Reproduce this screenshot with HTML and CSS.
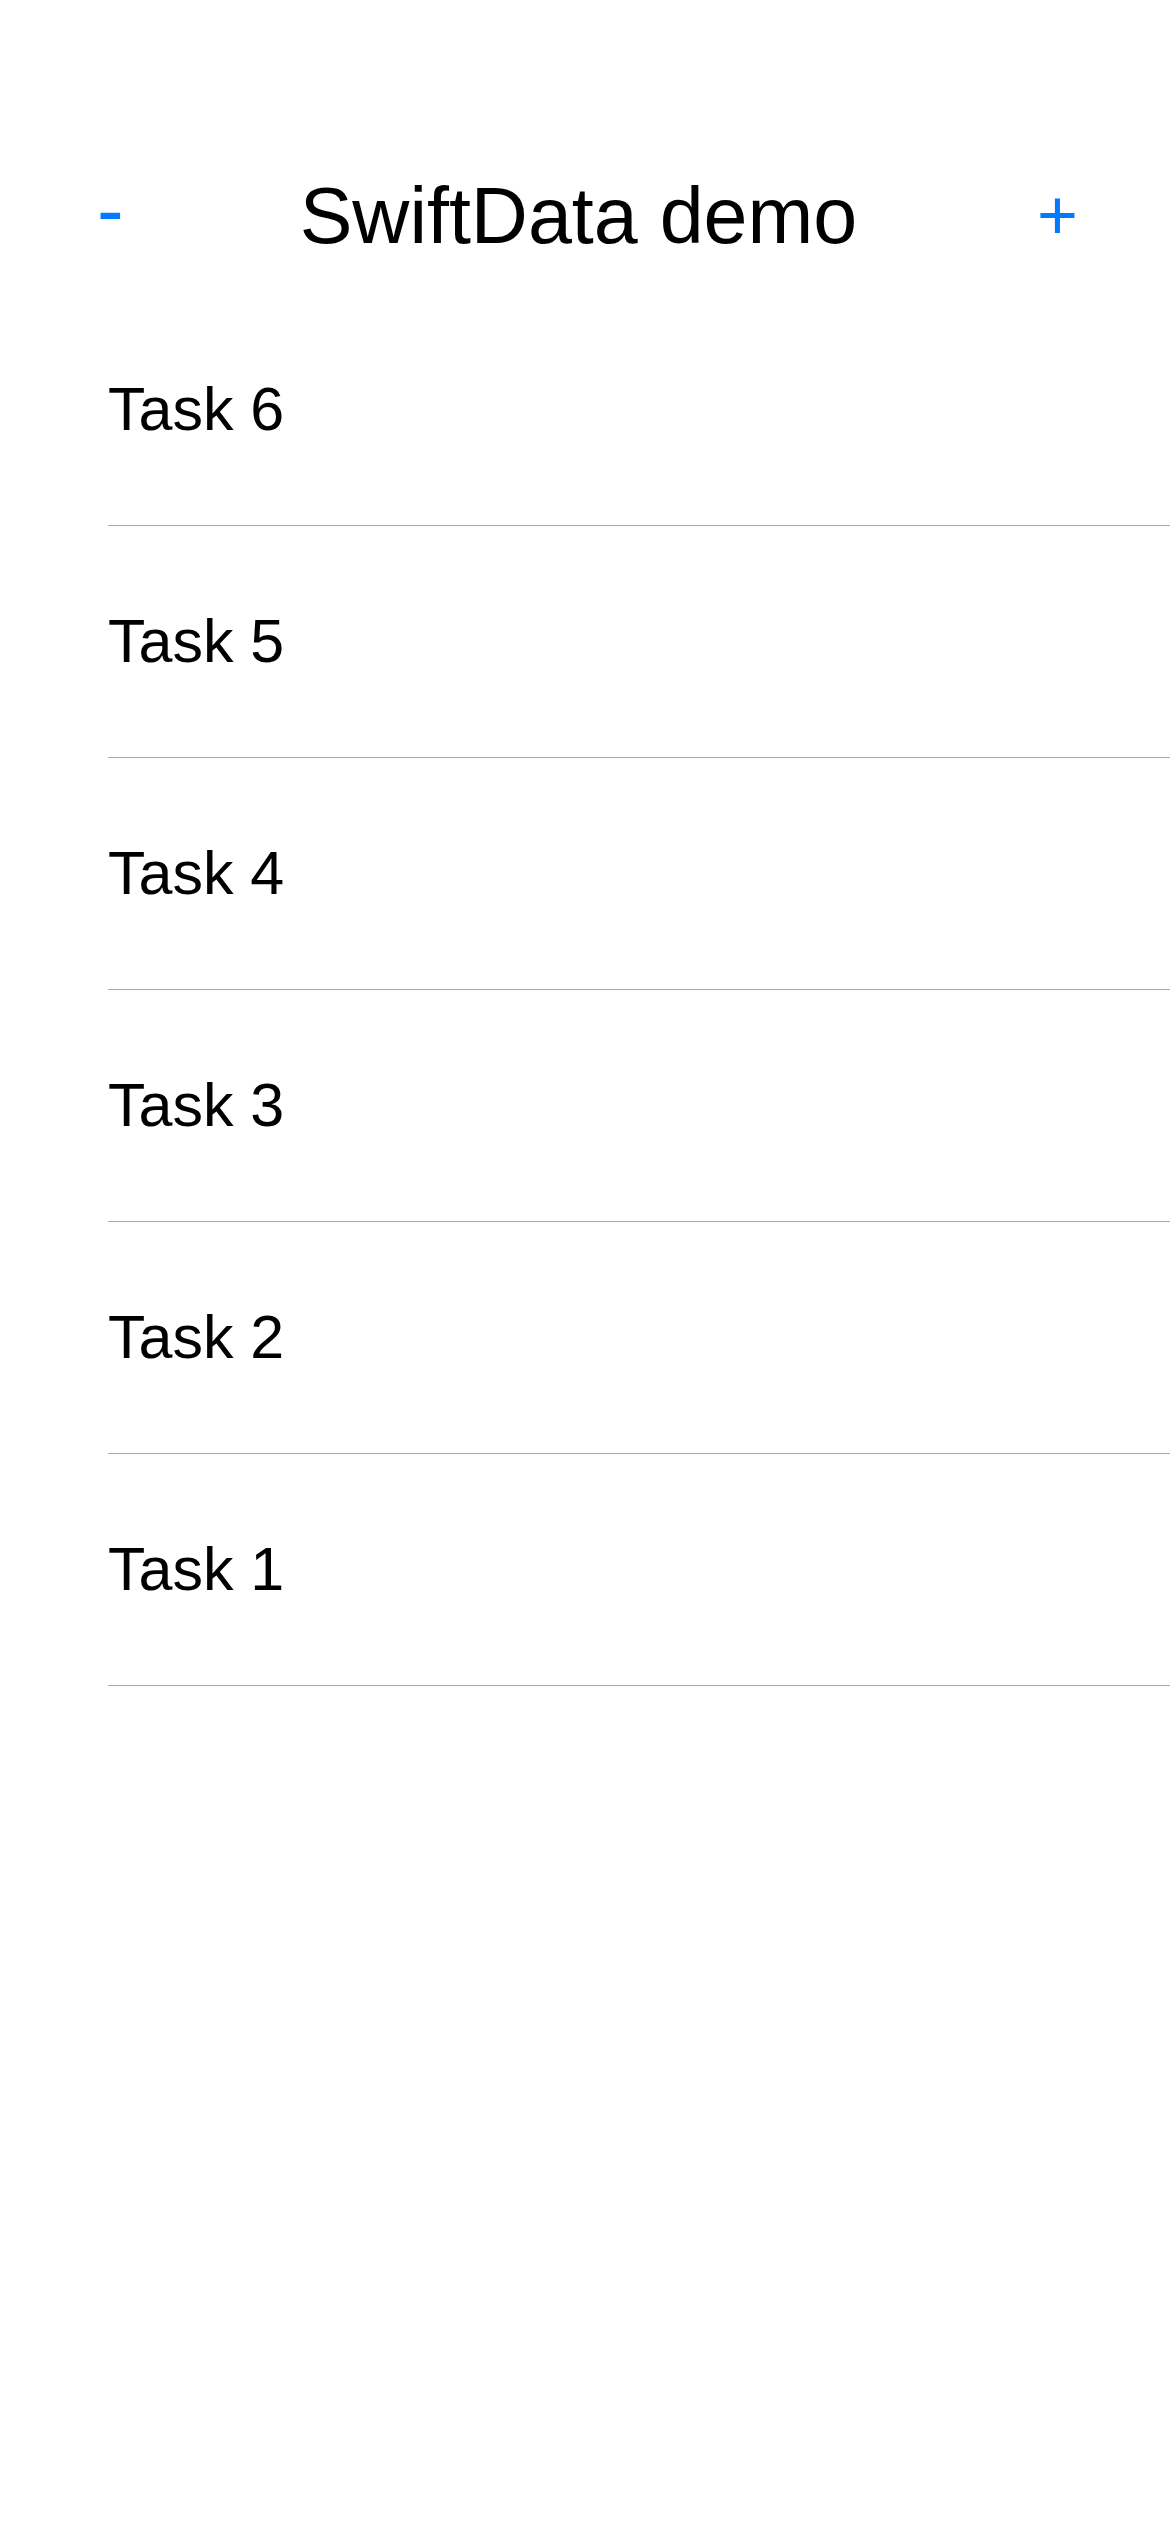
FILE: index.html
```html
<!DOCTYPE html>
<html lang="en">
<head>
<meta charset="utf-8">
<title>SwiftData demo</title>
<link rel="stylesheet" href="styles.css">
</head>
<body>
<div class="screen">
  <header class="navbar">
    <button class="nav-btn nav-left" type="button">-</button>
    <h1 class="nav-title">SwiftData demo</h1>
    <button class="nav-btn nav-right" type="button">+</button>
  </header>
  <ul class="task-list">
    <li class="task-row"><span class="task-label">Task 6</span></li>
    <li class="task-row"><span class="task-label">Task 5</span></li>
    <li class="task-row"><span class="task-label">Task 4</span></li>
    <li class="task-row"><span class="task-label">Task 3</span></li>
    <li class="task-row"><span class="task-label">Task 2</span></li>
    <li class="task-row"><span class="task-label">Task 1</span></li>
  </ul>
</div>
</body>
</html>
```
FILE: styles.css
```css
html, body {
  margin: 0;
  padding: 0;
  background: #ffffff;
}

body {
  font-family: "Liberation Sans", Arial, sans-serif;
  color: #000000;
}

.screen {
  width: 1170px;
  min-height: 2532px;
  padding-top: 150px;
  box-sizing: border-box;
}

.navbar {
  display: grid;
  grid-template-columns: 1fr auto 1fr;
  align-items: center;
  height: 130px;
  padding: 0 92px 0 97px;
}

.nav-btn {
  background: none;
  border: 0;
  padding: 0;
  margin: 0;
  color: #007aff;
  font-family: "Liberation Sans", Arial, sans-serif;
  font-size: 70px;
  line-height: 1;
  cursor: pointer;
}

.nav-left {
  justify-self: start;
  font-size: 80px;
  transform: translateY(-5px);
}

.nav-right {
  justify-self: end;
  font-size: 70px;
}

.nav-title {
  margin: 0;
  font-size: 79px;
  font-weight: 400;
  line-height: 1;
  transform: translateX(-9px);
}

.task-list {
  list-style: none;
  margin: 14px 0 0 0;
  padding: 0;
}

.task-row {
  display: flex;
  align-items: center;
  height: 232px;
  box-sizing: border-box;
  margin-left: 108px;
  border-bottom: 1px solid #a9a9ac;
}

.task-label {
  font-size: 61px;
  line-height: 1;
}
```
